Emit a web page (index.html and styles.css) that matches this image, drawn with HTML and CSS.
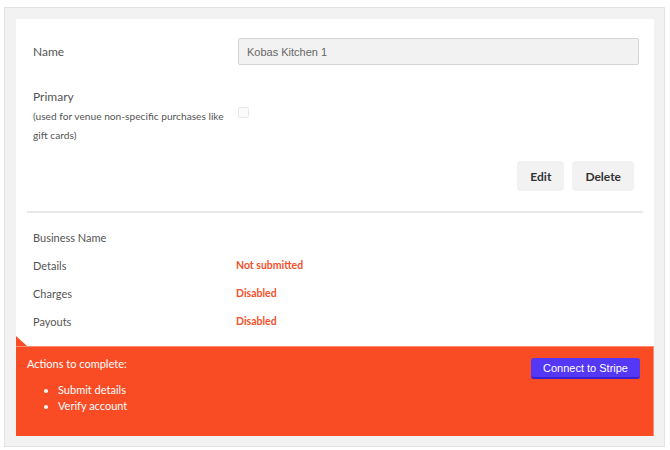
FILE: index.html
```html
<!DOCTYPE html>
<html lang="en">
<head>
    <meta charset="UTF-8">
    <title>Venue Settings</title>
    <link rel="stylesheet" href="styles.css">
</head>
<body>

    <div class="frame">
        <div class="panel">

            <!-- Venue details -->
            <div class="venue-form">
                <div class="form-row">
                    <label class="form-label" for="venueName">Name</label>
                    <input type="text" id="venueName" class="text-input" value="Kobas Kitchen 1" disabled>
                </div>

                <div class="form-row primary-row">
                    <div class="form-label">
                        <div class="primary-title">Primary</div>
                        <div class="hint">(used for venue non-specific purchases like gift cards)</div>
                    </div>
                    <input type="checkbox" class="checkbox" disabled>
                </div>

                <div class="form-actions">
                    <button class="btn">Edit</button>
                    <button class="btn">Delete</button>
                </div>
            </div>

            <hr class="divider">

            <!-- Stripe account status -->
            <div class="status-list">
                <div class="status-row">
                    <span class="status-label">Business Name</span>
                    <span class="status-value"></span>
                </div>
                <div class="status-row">
                    <span class="status-label">Details</span>
                    <span class="status-value warn">Not submitted</span>
                </div>
                <div class="status-row">
                    <span class="status-label">Charges</span>
                    <span class="status-value warn">Disabled</span>
                </div>
                <div class="status-row">
                    <span class="status-label">Payouts</span>
                    <span class="status-value warn">Disabled</span>
                </div>
            </div>

            <div class="alert">
                <div class="alert-body">
                    <div class="alert-title">Actions to complete:</div>
                    <ul class="alert-list">
                        <li>Submit details</li>
                        <li>Verify account</li>
                    </ul>
                </div>
                <button class="stripe-btn">Connect to Stripe</button>
            </div>

        </div>
    </div>

</body>
</html>
```

FILE: styles.css
```css
/* --- Base --- */
body {
    margin: 0;
    background-color: #ffffff;
    font-family: Lato, "Open Sans", sans-serif;
    font-size: 11px;
    color: #555555;
}

/* --- Outer frame --- */
.frame {
    margin: 7px 5px 2px 4px;
    border: 1px solid #e2e2e2;
    background-color: #f2f2f2;
    padding: 11px 10px 10px 11px;
}

.panel {
    background-color: #ffffff;
}

/* --- Venue form --- */
.venue-form {
    padding: 19px 15px 20px 17px;
}

.form-row {
    display: flex;
    align-items: center;
}

.form-label {
    width: 205px;
    flex-shrink: 0;
    font-size: 12px;
}

.text-input {
    flex-grow: 1;
    height: 27px;
    box-sizing: border-box;
    padding: 0 8px;
    border: 1px solid #d4d4d4;
    border-radius: 2px;
    background-color: #f2f2f2;
    color: #666666;
    font-family: "Liberation Sans", Arial, sans-serif;
    font-size: 11px;
}

.primary-row {
    margin-top: 23px;
    align-items: flex-start;
}

.primary-title {
    line-height: 18px;
}

.hint {
    margin-top: 1px;
    font-size: 10.2px;
    line-height: 19px;
}

.checkbox {
    margin: 19px 0 0 0;
    width: 11px;
    height: 11px;
    opacity: 0.5;
}

.form-actions {
    display: flex;
    justify-content: flex-end;
    gap: 8px;
    margin-top: 16px;
    padding-right: 5px;
}

.btn {
    height: 30px;
    padding: 0 13px;
    border: none;
    border-radius: 4px;
    background-color: #f2f2f2;
    color: #333333;
    font-family: Lato, "Open Sans", sans-serif;
    font-size: 12px;
    font-weight: 700;
    cursor: pointer;
}

.divider {
    margin: 0 11px;
    border: none;
    border-top: 2px solid #e8e8e8;
}

/* --- Status rows --- */
.status-list {
    padding: 10px 0 11px 17px;
}

.status-row {
    display: flex;
    align-items: center;
    height: 28px;
}

.status-label {
    width: 203px;
}

.status-value {
    font-size: 10.5px;
    font-weight: 700;
}

.warn { color: #f4502b; }

/* --- Alert band --- */
.alert {
    position: relative;
    display: flex;
    justify-content: space-between;
    align-items: flex-start;
    height: 90px;
    padding: 9px 13px 0 11px;
    box-sizing: border-box;
    border-top: 1px solid #fb8d73;
    border-right: 1px solid #fb8d73;
    background-color: #f94c25;
    color: #ffffff;
}

/* little fold at the top-left corner */
.alert::before {
    content: "";
    position: absolute;
    left: 0;
    top: -11px;
    border-left: 11px solid #f94c25;
    border-top: 10px solid transparent;
}

.alert-title {
    line-height: 16px;
}

.alert-list {
    margin: 10px 0 0 0;
    padding-left: 31px;
    line-height: 16px;
}

.stripe-btn {
    margin-top: 2px;
    height: 21px;
    padding: 0 12px;
    border: none;
    border-bottom: 2px solid #3a1ed0;
    border-radius: 3px;
    background-color: #5537f6;
    color: #ffffff;
    font-family: "Liberation Sans", Arial, sans-serif;
    font-size: 11px;
}
```
